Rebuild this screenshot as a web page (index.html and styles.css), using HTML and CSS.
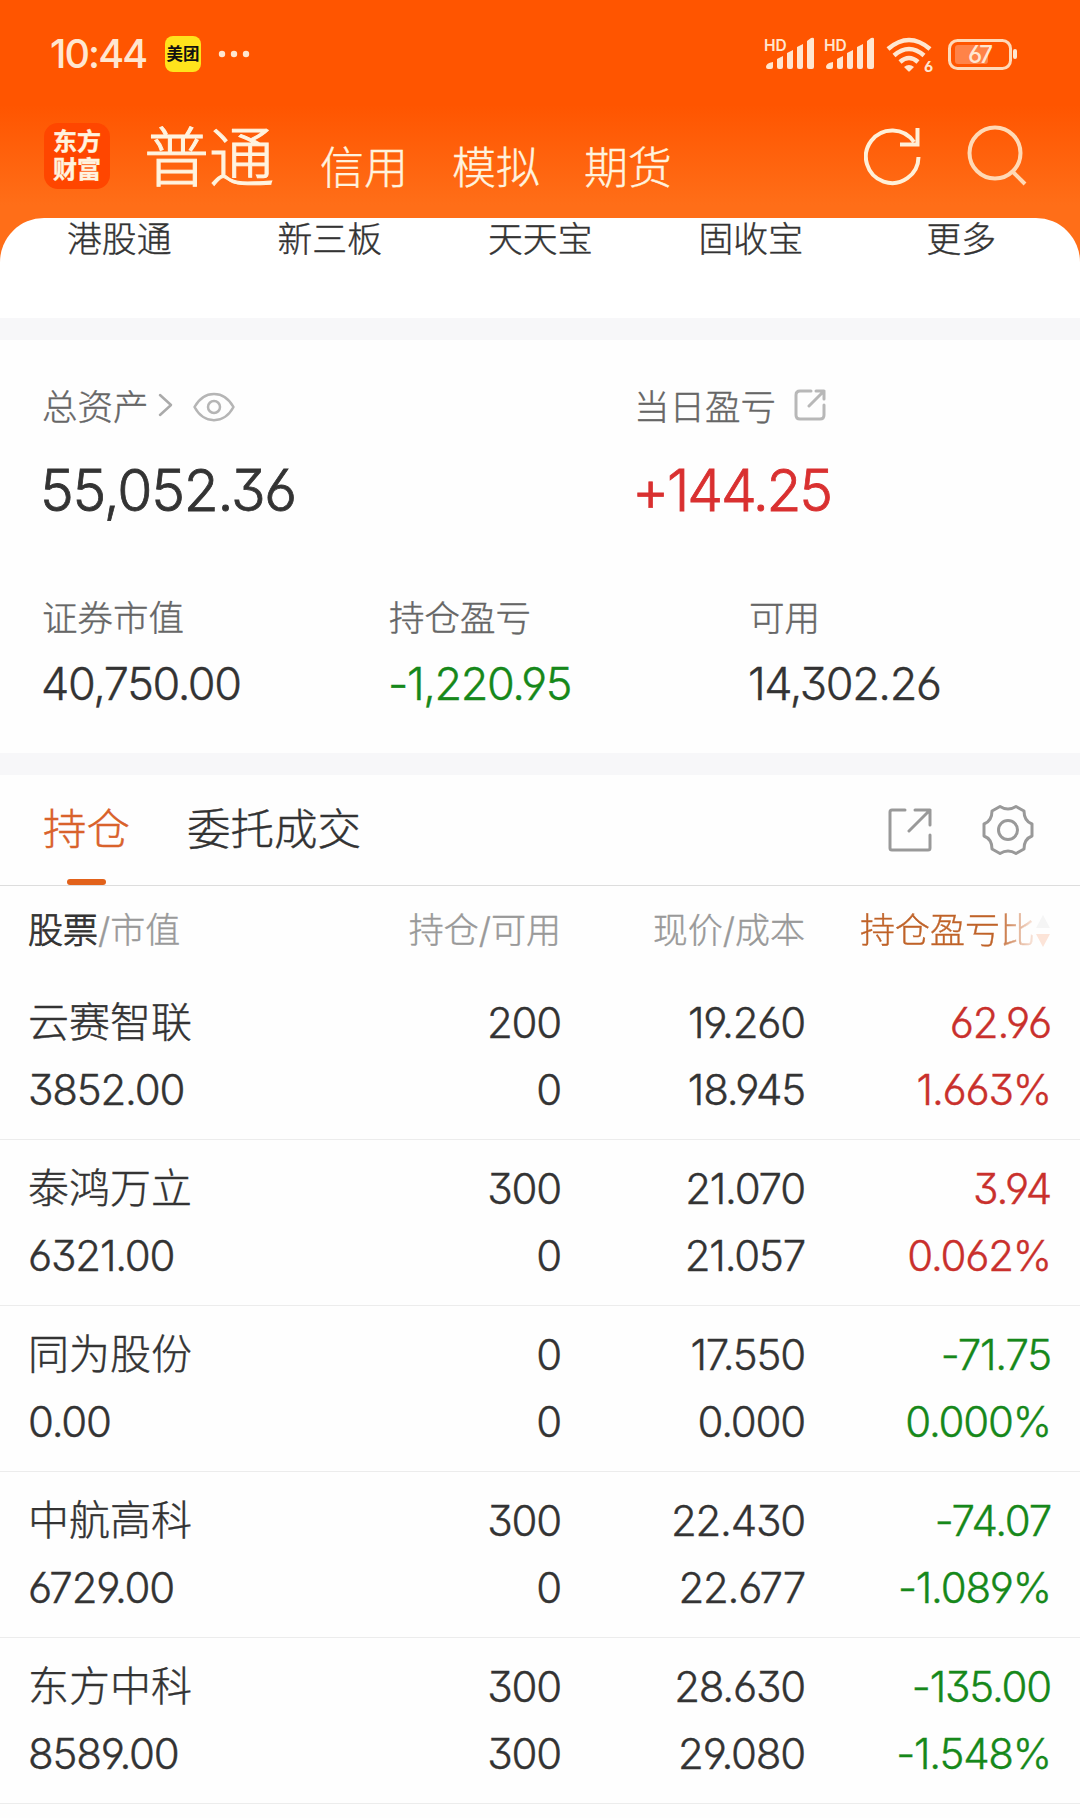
FILE: index.html
```html
<!DOCTYPE html>
<html lang="zh-CN">
<head>
    <meta charset="UTF-8">
    <meta name="viewport" content="width=device-width, initial-scale=1.0">
    <title>持仓</title>
    <link rel="stylesheet" href="styles.css">
</head>
<body>
    <header class="header">
        <div class="status-bar">
            <span class="clock">10:44</span>
            <span class="app-badge">美团</span>
            <svg class="dots" width="32" height="8" viewBox="0 0 32 8"><circle cx="4" cy="4" r="3.2"/><circle cx="16" cy="4" r="3.2"/><circle cx="28" cy="4" r="3.2"/></svg>
            <svg class="status-icons" width="262" height="40" viewBox="-6 0 262 40">
                <g id="signal">
                    <text class="hd" x="1" y="17">HD</text>
                    <path d="M3 35v-2q0-4 7-5v5q0 2-2 2H5q-2 0-2-2zM14 25l6-3v11q0 2-2 2h-2q-2 0-2-2zM24 19l6-3v17q0 2-2 2h-2q-2 0-2-2zM34 13l6-3v23q0 2-2 2h-2q-2 0-2-2zM44 7l4-3q3-1 3 1v28q0 2-2 2h-3q-2 0-2-2z"/>
                </g>
                <use href="#signal" x="60"/>
                <g class="wifi">
                    <path d="M125 15q21-18 42 0M131 21.500q15-13 30 0M137 28q9-8 18 0"/>
                    <path class="solid" d="M141 33q5-4 10 0l-4 4q-1 1-2 0z"/>
                </g>
                <text class="wifi-num" x="161" y="38">6</text>
                <rect class="battery" x="186.500" y="6.500" width="61" height="28" rx="8"/>
                <rect class="battery-fill" x="192" y="11" width="33" height="19" rx="3"/>
                <rect x="250" y="15" width="4" height="10" rx="2"/>
                <text class="battery-num" x="205" y="29">67</text>
            </svg>
        </div>
        <nav class="nav">
            <div class="logo"><span>东方</span><span>财富</span></div>
            <span class="nav-item active">普通</span>
            <span class="nav-item">信用</span>
            <span class="nav-item">模拟</span>
            <span class="nav-item">期货</span>
            <svg class="refresh" width="60" height="60" viewBox="0 0 60 60"><path d="M54.500 31A26.300 26.300 0 1 1 50 16M53.500 2v16.500H36"/></svg>
            <svg class="search" width="60" height="62" viewBox="0 0 60 62"><circle cx="28" cy="28" r="25.500"/><path d="M45 46l13 13"/></svg>
        </nav>
    </header>

    <section class="shortcuts">
        <span>港股通</span>
        <span>新三板</span>
        <span>天天宝</span>
        <span>固收宝</span>
        <span>更多</span>
    </section>

    <section class="assets">
        <div class="total">
            <div class="label">总资产
                <svg class="chevron" width="15" height="24" viewBox="0 0 15 24"><path d="M2 2l11 10L2 22"/></svg>
                <svg class="eye" width="42" height="30" viewBox="0 0 42 30"><path d="M1.500 15C11-2.500 31-2.500 40.500 15 31 32.500 11 32.500 1.500 15z"/><circle cx="21" cy="15" r="6"/></svg>
            </div>
            <div class="amount">55,052.36</div>
        </div>
        <div class="today">
            <div class="label">当日盈亏
                <svg class="share" width="32" height="32" viewBox="0 0 32 32"><path d="M17 2H6Q2 2 2 6v20q0 4 4 4h20q4 0 4-4V16M22 2h8v8M30 2L15 17"/></svg>
            </div>
            <div class="amount up">+144.25</div>
        </div>
        <div class="item">
            <div class="label">证券市值</div>
            <div class="value">40,750.00</div>
        </div>
        <div class="item">
            <div class="label">持仓盈亏</div>
            <div class="value down">-1,220.95</div>
        </div>
        <div class="item">
            <div class="label">可用</div>
            <div class="value">14,302.26</div>
        </div>
    </section>

    <section class="tabs">
        <span class="tab active">持仓</span>
        <span class="tab">委托成交</span>
        <svg class="export" width="44" height="44" viewBox="0 0 44 44"><path d="M17 2H4Q2 2 2 4v36q0 2 2 2h36q2 0 2-2V27M27 2h15v15M42 2L21 23"/></svg>
        <svg class="gear" width="52" height="52" viewBox="0 0 52 52"><path d="M18 2.500Q26 7.500 34 2.500L42 7Q42 17 50 20V32Q42 35 42 45L34 49.500Q26 44.500 18 49.500L10 45Q10 35 2 32V20Q10 17 10 7z"/><circle cx="26" cy="26" r="9.500"/></svg>
    </section>

    <section class="holdings">
        <div class="row head">
            <span><b>股票</b>/市值</span>
            <span>持仓/可用</span>
            <span>现价/成本</span>
            <span class="sorted"><span class="fade">持仓盈亏比</span><svg class="sort" width="16" height="34" viewBox="0 0 16 34"><path class="asc" d="M8 1l7 13H1z"/><path class="desc" d="M1 20h14L8 33z"/></svg></span>
        </div>
        <div class="row">
            <span class="name">云赛智联</span><span>200</span><span>19.260</span><span class="up">62.96</span>
            <span>3852.00</span><span>0</span><span>18.945</span><span class="up">1.663%</span>
        </div>
        <div class="row">
            <span class="name">泰鸿万立</span><span>300</span><span>21.070</span><span class="up">3.94</span>
            <span>6321.00</span><span>0</span><span>21.057</span><span class="up">0.062%</span>
        </div>
        <div class="row">
            <span class="name">同为股份</span><span>0</span><span>17.550</span><span class="down">-71.75</span>
            <span>0.00</span><span>0</span><span>0.000</span><span class="down">0.000%</span>
        </div>
        <div class="row">
            <span class="name">中航高科</span><span>300</span><span>22.430</span><span class="down">-74.07</span>
            <span>6729.00</span><span>0</span><span>22.677</span><span class="down">-1.089%</span>
        </div>
        <div class="row">
            <span class="name">东方中科</span><span>300</span><span>28.630</span><span class="down">-135.00</span>
            <span>8589.00</span><span>300</span><span>29.080</span><span class="down">-1.548%</span>
        </div>
    </section>
</body>
</html>
```
FILE: styles.css
```css
* {
    box-sizing: border-box;
}

body {
    margin: 0;
    width: 1080px;
    height: 1818px;
    overflow: hidden;
    background: #fefefe;
    color: #333;
    font-family: Inter, "Noto Sans CJK SC", sans-serif;
    font-weight: 300;
    font-feature-settings: "cv03", "cv04", "cv09";
    -webkit-text-stroke: 0.4px;
    white-space: nowrap;
}

svg {
    flex: none;
    fill: none;
    stroke-linecap: round;
    stroke-linejoin: round;
}

/* header */
.header {
    height: 262px;
    background: linear-gradient(#ff5500 0, #ff5500 105px, #ff6e18 205px, #ff6e18 262px);
    color: #fff3df;
}

.status-bar {
    display: flex;
    align-items: center;
    height: 108px;
    padding-left: 50px;
    -webkit-text-stroke: 0;
}

.clock {
    width: 115px;
    font-size: 39.500px;
    font-weight: 500;
    letter-spacing: -1.900px;
    color: #ffe6d0;
}

.app-badge {
    width: 36px;
    height: 36px;
    border-radius: 8px;
    background: #ffe31c;
    color: #111;
    font-size: 16.500px;
    font-weight: 700;
    line-height: 36px;
    text-align: center;
}

.dots {
    margin-left: 17px;
    fill: #ffe6d0;
}

.status-icons {
    margin-left: auto;
    margin-right: 61px;
    fill: #ffe6d0;
}

.hd {
    font-size: 15.500px;
    font-weight: 600;
}

.wifi {
    stroke: #ffe6d0;
    stroke-width: 4.500;
    stroke-linecap: butt;
    fill: none;
}

.wifi .solid {
    fill: #ffe6d0;
    stroke: none;
}

.wifi-num {
    font-size: 15px;
    font-weight: 700;
}

.battery {
    fill: none;
    stroke: #ffd9b8;
    stroke-width: 3;
}

.battery-fill {
    fill: #ff8348;
}

.battery-num {
    font-size: 24px;
    font-weight: 500;
    letter-spacing: -2px;
}

.nav {
    display: flex;
    align-items: center;
    height: 110px;
    padding-left: 44px;
    line-height: 90px;
}

.logo {
    display: flex;
    flex-direction: column;
    width: 66px;
    height: 66px;
    margin: -14px 34px 0 0;
    padding-top: 5px;
    border-radius: 14px;
    background: #ff4600;
    font-size: 24px;
    font-weight: 700;
    line-height: 28px;
    text-align: center;
}

.nav-item {
    margin: 9px 44px 0 0;
    font-size: 44px;
}

.nav-item.active {
    margin: -10px 46px 0 0;
    font-size: 65px;
    -webkit-text-stroke: 1px;
}

.refresh,
.search {
    margin-top: -14px;
    stroke: #fff0d8;
    stroke-width: 4;
    stroke-linecap: butt;
    stroke-linejoin: miter;
}

.refresh {
    margin-left: auto;
}

.search {
    margin: -14px 53px 0 43px;
    stroke: #ffd9b5;
}

/* shortcuts */
.shortcuts {
    display: grid;
    grid-template-columns: repeat(5, 210.500px);
    height: 100px;
    margin-top: -44px;
    padding: 1px 14px 0;
    border-radius: 44px 44px 0 0;
    background: #fff;
    font-size: 34.800px;
    line-height: 41px;
    text-align: center;
}

/* assets */
.assets {
    display: grid;
    grid-template-columns: 347px 245px 115px 374px;
    align-content: start;
    height: 457px;
    padding-left: 42px;
    border-top: 22px solid #f7f7f9;
    border-bottom: 22px solid #f7f7f9;
}

.total {
    grid-column: 1 / 3;
    height: 250px;
}

.today {
    grid-column: 3 / 5;
}

.label {
    display: flex;
    align-items: center;
    height: 50px;
    color: #666;
    font-size: 35.500px;
}

.total .label,
.today .label {
    margin-top: 39px;
}

.item:last-child {
    grid-column: 4;
}

.item:nth-child(4) {
    grid-column: 2 / 4;
}

.chevron {
    margin: 2px 0 0 9px;
    stroke: #aaa;
    stroke-width: 2.500;
}

.eye {
    margin: 5px 0 0 20px;
    stroke: #b5b5b5;
    stroke-width: 2.500;
}

.share {
    margin-left: 18px;
    margin-top: 2px;
    stroke: #b8b8b8;
    stroke-width: 3;
}

.amount {
    margin: 26px 0 0 -2px;
    font-size: 57px;
    line-height: 72px;
    letter-spacing: -1.200px;
    -webkit-text-stroke: 0.8px;
}

.value {
    margin: 19px 0 0 -1px;
    font-size: 45px;
    line-height: 50px;
    letter-spacing: -1.400px;
}

.up {
    color: #c9302c;
}

.amount.up {
    color: #d93030;
    letter-spacing: -2.200px;
}

.down {
    color: #16881a;
}

/* tabs */
.tabs {
    display: flex;
    align-items: center;
    height: 111px;
    padding-left: 43px;
    border-bottom: 1px solid #ddd;
}

.tab {
    height: 110px;
    margin-right: 57px;
    font-size: 43.500px;
    line-height: 109px;
}

.tab.active {
    color: #d9622b;
}

.tab.active::after {
    content: "";
    display: block;
    width: 39px;
    height: 6px;
    margin: -5px auto 0;
    border-radius: 3px;
    background: #e2621b;
}

.export {
    margin-left: auto;
    stroke: #999;
    stroke-width: 3;
}

.gear {
    margin: 0 46px 0 50px;
    stroke: #999;
    stroke-width: 3;
}

/* holdings */
.row {
    display: grid;
    grid-template-columns: 333px 200px 244px 246px;
    align-content: start;
    height: 166px;
    padding: 15px 0 0 28px;
    border-bottom: 1px solid #ececec;
    font-size: 42px;
    line-height: 67px;
    letter-spacing: -1.200px;
    text-align: right;
}

.row > :nth-child(4n + 1) {
    text-align: left;
}

.row .name {
    font-size: 41px;
    letter-spacing: 0;
}

.row.head {
    height: 88px;
    padding-top: 11px;
    border: 0;
    color: #999;
    font-size: 35px;
    letter-spacing: 0;
}

.head b {
    color: #333;
    font-weight: 300;
    -webkit-text-stroke: 0.8px;
}

.sorted {
    display: flex;
    align-items: center;
    justify-content: flex-end;
}

.fade {
    width: 175px;
    background: linear-gradient(90deg, #bf6228 78%, #fbeae2 100%);
    background-clip: text;
    -webkit-background-clip: text;
    color: transparent;
}

.asc {
    fill: #f5f5f5;
}

.desc {
    fill: #fce4d8;
}
```
